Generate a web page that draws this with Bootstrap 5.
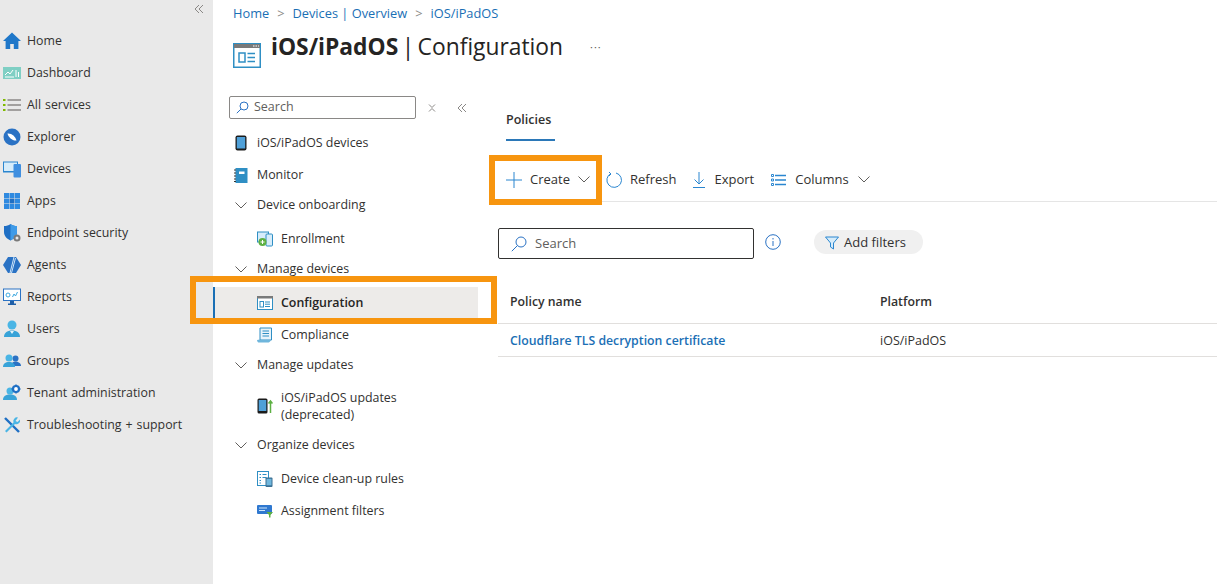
<!DOCTYPE html>
<html lang="en">

<head>
  <meta charset="UTF-8" />
  <title>iOS/iPadOS | Configuration</title>
  <meta name="viewport" content="width=device-width, initial-scale=1" />
  <link href="https://cdn.jsdelivr.net/npm/bootstrap@5.3.3/dist/css/bootstrap.min.css" rel="stylesheet" />
  <script src="https://cdn.jsdelivr.net/npm/bootstrap@5.3.3/dist/js/bootstrap.bundle.min.js"></script>
  <style>
    body {
      font-family: "Open Sans", "Noto Sans", sans-serif;
      font-size: 12.5px;
      color: #323130;
      height: 584px;
      overflow: hidden;
      position: relative;
    }

    a { color: inherit; text-decoration: none; }
    svg { display: block; flex: none; }

    /* left rail */
    .rail { width: 213px; height: 584px; background: #e9e9e9; flex: none; }
    .rail-top { height: 25px; padding: 4px 9px 0 0; }
    .rail .nav-link { height: 32px; padding: 0 0 0 3px; gap: 6px; color: #323130; font-size: 12.35px; word-spacing: .8px; }

    /* page */
    .page { padding-left: 20px; min-width: 0; }
    .crumbs { height: 27px; font-size: 12.8px; --bs-breadcrumb-divider: '>'; --bs-breadcrumb-divider-color: #8a8886; --bs-breadcrumb-item-padding-x: 8px; margin: 0; }
    .crumbs a { color: #1a6fb5; }
    .crumbs .breadcrumb-item.active { color: #1a6fb5; }
    .title-row { height: 51px; gap: 10px; }
    .title-row .title-icon { margin-top: 5px; }
    .title-row h1 { font-size: 22.8px; word-spacing: -2.5px; font-weight: 400; color: #252423; margin: 0 0 11px; }
    .title-row .more { margin: 0 0 11px 17px; color: #605e5c; font-size: 11px; letter-spacing: 1px; }

    /* blade menu */
    .blade { width: 265px; flex: none; padding-top: 18px; margin-left: -20px; }
    .blade-top { padding-left: 16px; gap: 11px; height: 23px; }
    .blade-top > svg:last-child { margin-left: 9px; }
    .side-search { width: 187px; height: 23px; border: 1px solid #8a8886; border-radius: 2px; gap: 5px; padding-left: 6px; color: #605e5c; }
    .blade .nav { padding-top: 8px; }
    .blade .nav-link { height: 32px; color: #323130; padding: 0; font-size: 12.4px; }
    .blade .top-item { padding-left: 21px; gap: 9px; }
    .blade .head-item { height: 28px; padding-left: 22px; gap: 10px; }
    .blade .sub-group { padding-top: 4px; }
    .blade .sub-item { padding-left: 44px; gap: 8px; }
    .blade .sub-item.two-line { height: 48px; line-height: 17px; padding-bottom: 2px; }
    .blade .sub-item.active { background: #edebe9; font-weight: 600; border-left: 2px solid #1a6fb5; padding-left: 42px; color: #252423; }

    /* right content */
    .content { min-width: 0; padding-left: 20px; }
    .tab-row { height: 78px; padding: 33px 0 0 8px; }
    .tab-on { width: 49px; height: 30px; border-bottom: 2px solid #2b78b8; font-weight: 600; white-space: nowrap; }
    .tools { height: 46px; border-bottom: 1px solid #e5e5e5; padding: 2px 0 0 8px; }
    .tool { gap: 8px; color: #323130; font-size: 13px; }
    .tool-columns { margin-left: 17px; gap: 9px; }
    .main-search { width: 256px; height: 31px; border: 1px solid #323130; border-radius: 2px; padding-left: 12px; gap: 8px; color: #605e5c; font-size: 13px; }
    .search-row { padding-top: 26px; height: 71px; }
    .info-icon { margin: 6px 0 0 11px; }
    .filter-pill { height: 24px; width: 109px; border-radius: 12px; background: #f0f0f0; gap: 5px; padding: 1px 0 0 11px; margin: 2px 0 0 33px; font-size: 13px; }
    .policy-table { margin: 6px 0 0; --bs-table-border-color: #e1dfdd; font-size: 12.5px; color: #323130; }
    .policy-table th { height: 44px; padding: 2px 0 0 12px; font-size: 12.3px; font-weight: 600; vertical-align: middle; }
    .policy-table td { height: 33px; padding: 3px 0 0 12px; vertical-align: middle; }
    .policy-table .name-col { width: 370px; }
    .policy-table a { color: #1a6fb5; font-size: 12.3px; font-weight: 600; }

    /* orange call-outs drawn on top of the screenshot */
    .callout { position: absolute; border: 6px solid #f7950f; pointer-events: none; }
    .callout-config { left: 190px; top: 276px; width: 307px; height: 48px; }
    .callout-create { left: 489px; top: 155px; width: 113px; height: 50px; }
  </style>
</head>

<body class="bg-white">
  <div class="d-flex">

    <!-- Left rail -->
    <aside class="rail">
      <div class="rail-top d-flex justify-content-end">
        <svg width="10" height="10" viewBox="0 0 10 10" fill="none" stroke="#8a8886"><path d="M5 1 1 5l4 4M9 1 5 5l4 4" /></svg>
      </div>
      <nav class="nav flex-column">
        <a class="nav-link d-flex align-items-center" href="#">
          <svg width="18" height="18" viewBox="0 0 18 18"><path d="M9 .5 0 9h2.600v8h4.600v-5h3.600v5h4.600V9H18z" fill="#1f77c9" /></svg>Home</a>
        <a class="nav-link d-flex align-items-center" href="#">
          <svg width="18" height="18" viewBox="0 0 18 18"><rect y="3" width="18" height="12" fill="#7fcfc4" /><path d="M2 11l3-3 2 2 3-4" stroke="#fff" fill="none" /><path d="M2 13h9M13 6v7M15.500 8v5" stroke="#fff" /></svg>Dashboard</a>
        <a class="nav-link d-flex align-items-center" href="#">
          <svg width="18" height="18" viewBox="0 0 18 18"><path d="M4.500 4H18M4.500 9H18M4.500 14H18" stroke="#8a8886" stroke-width="1.300" /><path d="M0 3h2.500v2H0zM0 8h2.500v2H0zM0 13h2.500v2H0z" fill="#7fba00" /></svg>All services</a>
        <a class="nav-link d-flex align-items-center" href="#">
          <svg width="18" height="18" viewBox="0 0 18 18"><circle cx="9" cy="9" r="8.500" fill="#2a72c4" /><path d="M4.500 5.500c4-.5 8 3 9 7-4 .5-8-3-9-7z" fill="#fff" /></svg>Explorer</a>
        <a class="nav-link d-flex align-items-center" href="#">
          <svg width="18" height="18" viewBox="0 0 18 18"><rect x=".5" y="2" width="14" height="10" fill="#d6ecfa" stroke="#2a86d0" /><path d="M.5 11.500h11" stroke="#2a86d0" /><rect x="10.500" y="4" width="7.500" height="13.500" rx="1" fill="#3f8fe0" /></svg>Devices</a>
        <a class="nav-link d-flex align-items-center" href="#">
          <svg width="18" height="18" viewBox="0 0 18 18" fill="#2f8ae0"><rect x="1" y="1" width="5" height="5" /><rect x="6.500" y="1" width="5" height="5" /><rect x="12" y="1" width="5" height="5" /><rect x="1" y="6.500" width="5" height="5" /><rect x="6.500" y="6.500" width="5" height="5" fill="#1f6fc4" /><rect x="12" y="6.500" width="5" height="5" /><rect x="1" y="12" width="5" height="5" /><rect x="6.500" y="12" width="5" height="5" /><rect x="12" y="12" width="5" height="5" /></svg>Apps</a>
        <a class="nav-link d-flex align-items-center" href="#">
          <svg width="18" height="18" viewBox="0 0 18 18"><path d="M7.500 0C5.500 1.500 3.500 2 1 2v6c0 4 3 7 6.500 8.500C11 15 14 12 14 8V2c-2.500 0-4.500-.5-6.500-2z" fill="#1f6fc4" /><path d="M7.500 0v16.500C11 15 14 12 14 8V2c-2.500 0-4.500-.5-6.500-2z" fill="#3f9be8" /><circle cx="14" cy="14" r="2.500" fill="#e9e9e9" stroke="#7a7a7a" stroke-width="2" /></svg>Endpoint security</a>
        <a class="nav-link d-flex align-items-center" href="#">
          <svg width="18" height="18" viewBox="0 0 18 18"><path d="M5 1h8l5 8-5 8H5L0 9z" fill="#2a72c4" /><path d="M11 1 7 17M12.500 2l-4 15" stroke="#cfe6fa" stroke-width="1" /></svg>Agents</a>
        <a class="nav-link d-flex align-items-center" href="#">
          <svg width="18" height="18" viewBox="0 0 18 18"><rect x=".5" y="1" width="17" height="11.500" fill="#fff" stroke="#2a72c4" /><path d="M7 13h4v2.500h2V17H5v-1.500h2z" fill="#1f5fa8" /><circle cx="5" cy="7" r="2" fill="none" stroke="#3fa9e0" /><path d="M9.500 9l1.500-3 1.500 2 2-4" fill="none" stroke="#3fa9e0" /></svg>Reports</a>
        <a class="nav-link d-flex align-items-center" href="#">
          <svg width="18" height="18" viewBox="0 0 18 18"><circle cx="9" cy="5" r="4.500" fill="#4ab5e5" /><path d="M1 17c0-4 3-6.500 8-6.500s8 2.500 8 6.500z" fill="#38a3d8" /><path d="M7 11l2 3 2-3" fill="#e3f4fb" /></svg>Users</a>
        <a class="nav-link d-flex align-items-center" href="#">
          <svg width="18" height="18" viewBox="0 0 18 18"><circle cx="12.500" cy="6.500" r="3" fill="#2a72c4" /><path d="M8 14c0-3 2-4.500 4.500-4.500S18 11 18 14z" fill="#2a72c4" /><circle cx="6" cy="6" r="3.500" fill="#4ab5e5" /><path d="M0 15c0-3.500 2.500-5 6-5s6 1.500 6 5z" fill="#38a3d8" /></svg>Groups</a>
        <a class="nav-link d-flex align-items-center" href="#">
          <svg width="18" height="18" viewBox="0 0 18 18"><circle cx="7" cy="7" r="3.500" fill="#4ab5e5" /><path d="M0 16c0-4 3-5.500 7-5.500s7 1.500 7 5.500z" fill="#38a3d8" /><circle cx="13" cy="5" r="3" fill="#fff" stroke="#1f6fc4" stroke-width="2.200" /><path d="M13 .5v1.500M13 8v1.500M8.500 5H10M16 5h1.500" stroke="#1f6fc4" stroke-width="1.500" /></svg>Tenant administration</a>
        <a class="nav-link d-flex align-items-center" href="#">
          <svg width="18" height="18" viewBox="0 0 18 18"><path d="M2 2l14 14" stroke="#1f6fc4" stroke-width="2.400" /><path d="M15 1.500a3.800 3.800 0 0 0-4.500 5L2 15l1.500 1.500 8.500-8.500a3.800 3.800 0 0 0 5-4.500L14.500 6 12.500 5z" fill="#4ab5e5" /></svg>Troubleshooting + support</a>
      </nav>
    </aside>

    <!-- Page -->
    <div class="page flex-grow-1">
      <ol class="breadcrumb crumbs align-items-center">
        <li class="breadcrumb-item"><a href="#">Home</a></li>
        <li class="breadcrumb-item"><a href="#">Devices | Overview</a></li>
        <li class="breadcrumb-item active">iOS/iPadOS</li>
      </ol>

      <div class="title-row d-flex align-items-center">
        <svg class="title-icon" width="28" height="25" viewBox="0 0 28 25"><rect x=".75" y=".75" width="26.500" height="23.500" fill="#fff" stroke="#2f8fc4" stroke-width="1.500" /><rect x="1" y="1" width="26" height="4" fill="#7a7a7a" /><path d="M20 3h1.500M22.500 3H24M25 3h1" stroke="#fff" /><rect x="6" y="10" width="6" height="9" fill="none" stroke="#2f8fc4" stroke-width="1.500" /><path d="M14.500 10.500h7.500M14.500 14.500h7.500M14.500 18.500h7.500" stroke="#2f8fc4" stroke-width="1.500" /></svg>
        <h1><strong>iOS/iPadOS</strong> | Configuration</h1>
        <span class="more">···</span>
      </div>

      <div class="d-flex">
        <!-- Blade menu -->
        <div class="blade">
          <div class="blade-top d-flex align-items-center">
            <div class="side-search d-flex align-items-center">
              <svg width="13" height="13" viewBox="0 0 13 13" fill="none" stroke="#2a72c4"><circle cx="8" cy="5" r="4" /><path d="M5 8 .8 12.200" /></svg>Search
            </div>
            <svg width="10" height="10" viewBox="0 0 10 10" fill="none" stroke="#8a8886"><path d="M2 1.500l3 3 3-3M2 8.500l3-3 3 3" /></svg>
            <svg width="10" height="10" viewBox="0 0 10 10" fill="none" stroke="#8a8886"><path d="M5 1 1 5l4 4M9 1 5 5l4 4" /></svg>
          </div>

          <nav class="nav flex-column">
            <a class="nav-link top-item d-flex align-items-center" href="#">
              <svg width="14" height="16" viewBox="0 0 14 16"><rect x="1.500" y=".5" width="11" height="15" rx="2" fill="#1b1b1b" /><rect x="2.800" y="2" width="8.400" height="11.500" fill="#4fa0d8" /></svg>iOS/iPadOS devices</a>
            <a class="nav-link top-item d-flex align-items-center" href="#">
              <svg width="14" height="15" viewBox="0 0 14 15"><rect x="1.500" width="12" height="15" fill="#2f8fc4" /><rect x="5" y="3.500" width="5.500" height="2.500" fill="#fff" /><path d="M0 2h2M0 5h2M0 8h2M0 11h2M0 13.500h2" stroke="#323130" /></svg>Monitor</a>

            <a class="nav-link head-item d-flex align-items-center" href="#">
              <svg width="12" height="7" viewBox="0 0 12 7" fill="none" stroke="#605e5c"><path d="M.5.5 6 6l5.500-5.500" /></svg>Device onboarding</a>
            <div class="sub-group">
              <a class="nav-link sub-item d-flex align-items-center" href="#">
                <svg width="16" height="16" viewBox="0 0 16 16"><rect x=".5" y="1" width="11" height="10" fill="#d6ecfa" stroke="#2f8fc4" /><rect x="9" y="3" width="6.500" height="12" rx="1" fill="#d6ecfa" stroke="#2f8fc4" /><circle cx="5.500" cy="11" r="4" fill="#5db043" /><path d="M3.500 11h4M5.500 9v4" stroke="#fff" /></svg>Enrollment</a>
            </div>

            <a class="nav-link head-item d-flex align-items-center" href="#">
              <svg width="12" height="7" viewBox="0 0 12 7" fill="none" stroke="#605e5c"><path d="M.5.5 6 6l5.500-5.500" /></svg>Manage devices</a>
            <div class="sub-group">
              <a class="nav-link sub-item active d-flex align-items-center" href="#">
                <svg width="16" height="14" viewBox="0 0 16 14"><rect x=".5" y=".5" width="15" height="13" fill="#fff" stroke="#2f8fc4" /><rect width="16" height="2.500" fill="#7a7a7a" /><rect x="3" y="5.500" width="3.500" height="5.500" fill="none" stroke="#2f8fc4" /><path d="M8 6h5M8 8.200h5M8 10.500h5" stroke="#2f8fc4" /></svg>Configuration</a>
              <a class="nav-link sub-item d-flex align-items-center" href="#">
                <svg width="16" height="16" viewBox="0 0 16 16"><path d="M3 1h11.500v12H3z" fill="#e8f3fa" stroke="#2f8fc4" /><path d="M5.500 4h6.500M5.500 6.500h6.500M5.500 9h6.500" stroke="#2f8fc4" /><path d="M0 13c2-.8 3.500-.8 5 0h9c-1 2-2 2.500-3 2.500H1.500C.7 15.500.3 14.500 0 13z" fill="#6fb6dc" /></svg>Compliance</a>
            </div>

            <a class="nav-link head-item d-flex align-items-center" href="#">
              <svg width="12" height="7" viewBox="0 0 12 7" fill="none" stroke="#605e5c"><path d="M.5.5 6 6l5.500-5.500" /></svg>Manage updates</a>
            <div class="sub-group">
              <a class="nav-link sub-item two-line d-flex align-items-center" href="#">
                <svg width="16" height="16" viewBox="0 0 16 16"><rect x=".5" y=".5" width="10" height="15" rx="1.500" fill="#1b1b1b" /><rect x="1.700" y="2" width="7.600" height="11" fill="#4fa0d8" /><path d="M13.500 15V3M11.500 5.500l2-2.500 2 2.500" fill="none" stroke="#5db043" stroke-width="1.500" /></svg><span>iOS/iPadOS updates<br />(deprecated)</span></a>
            </div>

            <a class="nav-link head-item d-flex align-items-center" href="#">
              <svg width="12" height="7" viewBox="0 0 12 7" fill="none" stroke="#605e5c"><path d="M.5.5 6 6l5.500-5.500" /></svg>Organize devices</a>
            <div class="sub-group">
              <a class="nav-link sub-item d-flex align-items-center" href="#">
                <svg width="16" height="16" viewBox="0 0 16 16"><rect x=".5" y=".5" width="11" height="14" fill="#fff" stroke="#2f8fc4" /><path d="M2.500 3.500h1.500M5.500 3.500h4M2.500 6.500h1.500M5.500 6.500h4M2.500 9.500h1.500M2.500 12h1.500" stroke="#2f8fc4" /><rect x="8.500" y="6.500" width="7" height="9.500" rx="1" fill="#3a6f92" /><rect x="9.500" y="7.800" width="5" height="6.500" fill="#6fb6dc" /></svg>Device clean-up rules</a>
              <a class="nav-link sub-item d-flex align-items-center" href="#">
                <svg width="16" height="14" viewBox="0 0 16 14"><rect y="1" width="15" height="9" rx="1" fill="#2f78d0" /><path d="M2 4h8M2 6.500h6" stroke="#cfe6fa" /><path d="M9.500 8h6.500l-2.500 3v2.500h-1.500V11z" fill="#5db043" /></svg>Assignment filters</a>
            </div>
          </nav>
        </div>

        <!-- Content -->
        <div class="content flex-grow-1">
          <div class="tab-row"><div class="tab-on">Policies</div></div>

          <div class="tools d-flex align-items-center">
            <a class="tool d-flex align-items-center" href="#">
              <svg width="16" height="16" viewBox="0 0 16 16" fill="none" stroke="#2a86d0"><path d="M8 0v16M0 8h16" /></svg>Create
              <svg width="12" height="7" viewBox="0 0 12 7" fill="none" stroke="#605e5c"><path d="M.5.5 6 6l5.500-5.500" /></svg>
            </a>
            <a class="tool d-flex align-items-center ms-3" href="#">
              <svg width="16" height="16" viewBox="0 0 16 16" fill="none" stroke="#2a86d0"><path d="M5 1.500A7.300 7.300 0 1 0 10 1M3 0l2 2-2 2" /></svg>Refresh
            </a>
            <a class="tool d-flex align-items-center ms-3" href="#">
              <svg width="14" height="16" viewBox="0 0 14 16" fill="none" stroke="#2a86d0"><path d="M7 0v12M2.500 7.500 7 12l4.500-4.500M1 15.500h12" /></svg>Export
            </a>
            <a class="tool tool-columns d-flex align-items-center" href="#">
              <svg width="15" height="12" viewBox="0 0 15 12" fill="none" stroke="#2a86d0"><path d="M4 1.500h11M4 6h11M4 10.500h11" stroke-width="1.300" /><path d="M.5.5h2v2h-2zM.5 5h2v2h-2zM.5 9.500h2v2h-2z" /></svg>Columns
              <svg width="12" height="7" viewBox="0 0 12 7" fill="none" stroke="#605e5c"><path d="M.5.5 6 6l5.500-5.500" /></svg>
            </a>
          </div>

          <div class="search-row d-flex align-items-start">
            <div class="main-search d-flex align-items-center">
              <svg width="16" height="16" viewBox="0 0 16 16" fill="none" stroke="#2a72c4"><circle cx="10" cy="6" r="5" /><path d="M6.500 9.500 .8 15.200" /></svg>Search
            </div>
            <svg class="info-icon" width="16" height="16" viewBox="0 0 16 16" fill="none" stroke="#2a72c4"><circle cx="8" cy="8" r="7.300" /><path d="M8 7v5M8 4v1.500" /></svg>
            <div class="filter-pill d-flex align-items-center">
              <svg width="14" height="14" viewBox="0 0 14 14"><path d="M.5 1h13L8.500 7v6L5.500 11V7z" fill="#d6ecfa" stroke="#2a86d0" /></svg>Add filters
            </div>
          </div>

          <table class="table policy-table">
            <thead>
              <tr><th class="name-col">Policy name</th><th>Platform</th></tr>
            </thead>
            <tbody>
              <tr><td><a href="#">Cloudflare TLS decryption certificate</a></td><td>iOS/iPadOS</td></tr>
            </tbody>
          </table>
        </div>
      </div>
    </div>
  </div>

  <div class="callout callout-config"></div>
  <div class="callout callout-create"></div>
</body>

</html>
